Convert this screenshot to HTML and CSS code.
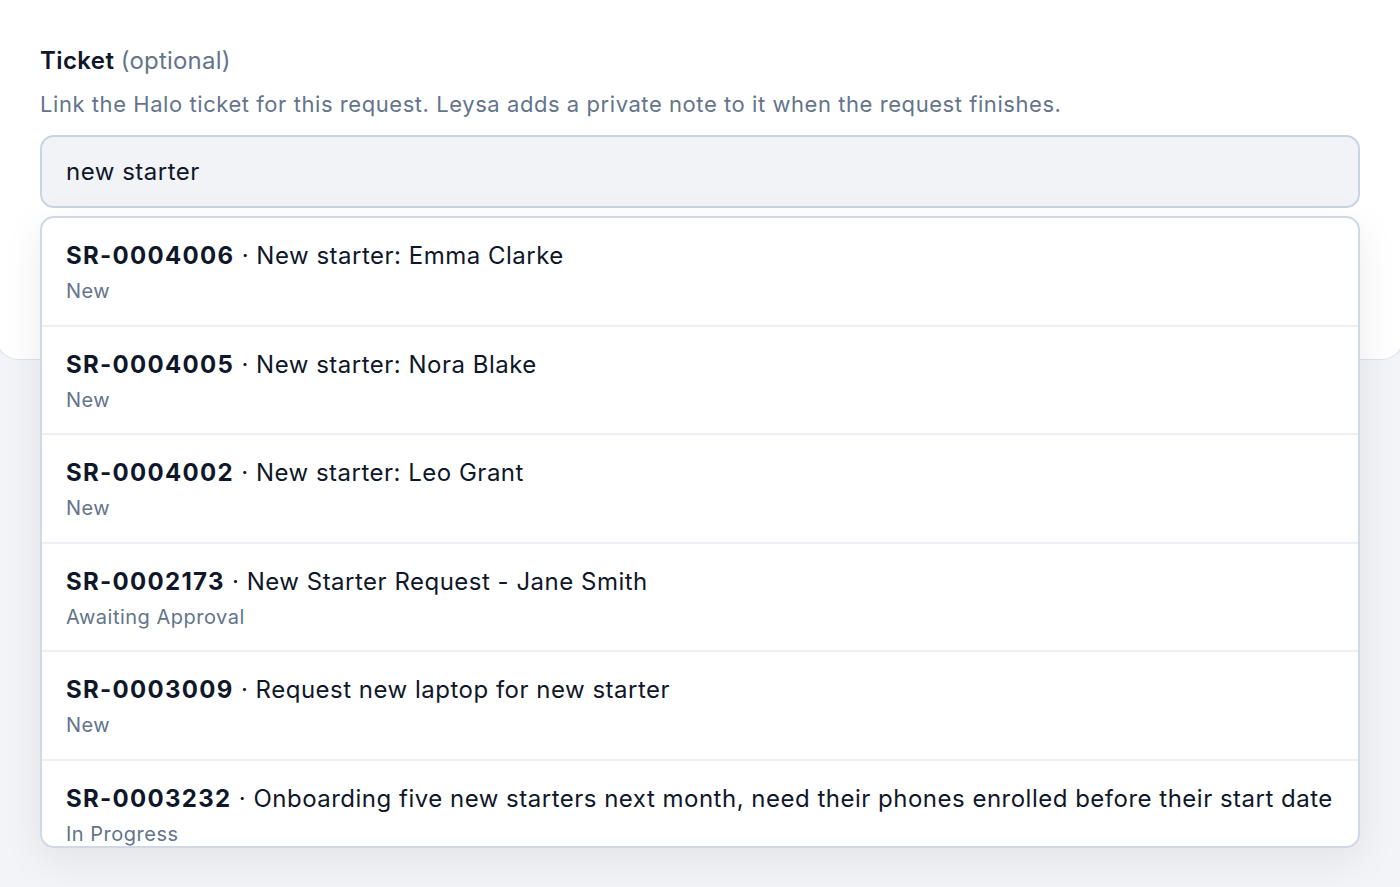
FILE: index.html
```html
<!DOCTYPE html>
<html lang="en">
<head>
    <meta charset="UTF-8">
    <meta name="viewport" content="width=device-width, initial-scale=1.0">
    <title>Request details</title>
    <link rel="stylesheet" href="styles.css">
</head>
<body>

<div class="card">
    <div class="field">
        <label class="field-label" for="ticket">Ticket <span class="optional">(optional)</span></label>
        <p class="field-help">Link the Halo ticket for this request. Leysa adds a private note to it when the request finishes.</p>
        <input id="ticket" class="field-input" type="text" value="new starter" autocomplete="off">

        <ul class="suggestions">
            <li class="suggestion">
                <div class="suggestion-title"><strong>SR-0004006</strong> · New starter: Emma Clarke</div>
                <div class="suggestion-status">New</div>
            </li>
            <li class="suggestion">
                <div class="suggestion-title"><strong>SR-0004005</strong> · New starter: Nora Blake</div>
                <div class="suggestion-status">New</div>
            </li>
            <li class="suggestion">
                <div class="suggestion-title"><strong>SR-0004002</strong> · New starter: Leo Grant</div>
                <div class="suggestion-status">New</div>
            </li>
            <li class="suggestion">
                <div class="suggestion-title"><strong>SR-0002173</strong> · New Starter Request - Jane Smith</div>
                <div class="suggestion-status">Awaiting Approval</div>
            </li>
            <li class="suggestion">
                <div class="suggestion-title"><strong>SR-0003009</strong> · Request new laptop for new starter</div>
                <div class="suggestion-status">New</div>
            </li>
            <li class="suggestion">
                <div class="suggestion-title"><strong>SR-0003232</strong> · Onboarding five new starters next month, need their phones enrolled before their start date</div>
                <div class="suggestion-status">In Progress</div>
            </li>
        </ul>
    </div>
</div>

</body>
</html>
```

FILE: styles.css
```css
body {
    font-family: Inter, "Noto Sans", sans-serif;
    background-color: #f3f4f7;
    color: #0f172a;
    margin: 0;
    min-height: 100vh;
}
.card {
    background-color: #fff;
    border: 1px solid #dde3ec;
    border-top: none;
    border-radius: 0 0 22px 22px;
    margin: 0 -4px;
    padding: 45px 43px 151px;
}
.field {
    position: relative;
}
.field-label {
    display: block;
    font-size: 24px;
    font-weight: 600;
    line-height: 32px;
    letter-spacing: 0.4px;
}
.field-label .optional {
    font-weight: 400;
    color: #64748b;
    letter-spacing: 0.2px;
}
.field-help {
    margin: 13px 0 17px;
    font-size: 22px;
    line-height: 28px;
    letter-spacing: 0.56px;
    color: #64748b;
}
.field-input {
    box-sizing: border-box;
    display: block;
    width: 100%;
    height: 73px;
    padding: 0 24px;
    font-family: inherit;
    font-size: 24px;
    letter-spacing: 0.5px;
    color: #0f172a;
    background-color: #f1f3f7;
    border: 2px solid #c9d4e2;
    border-radius: 14px;
    outline: none;
}
.suggestions {
    position: absolute;
    left: 0;
    right: 0;
    top: calc(100% + 8px);
    margin: 0;
    padding: 0;
    list-style: none;
    background-color: #fff;
    border: 2px solid #cfd8e4;
    border-radius: 14px;
    max-height: 628px;
    overflow: hidden;
    box-shadow: 0 12px 40px rgba(15, 23, 42, 0.08);
}
.suggestion {
    padding: 22px 24px 17.5px;
    border-bottom: 2px solid #edf0f5;
    cursor: pointer;
}
.suggestion-title {
    font-size: 24px;
    line-height: 32px;
    letter-spacing: 0.5px;
    white-space: nowrap;
}
.suggestion-title strong {
    font-weight: 700;
    letter-spacing: 1.3px;
}
.suggestion-status {
    margin-top: 3px;
    font-size: 20px;
    line-height: 32px;
    letter-spacing: 0.5px;
    color: #64748b;
}
```
